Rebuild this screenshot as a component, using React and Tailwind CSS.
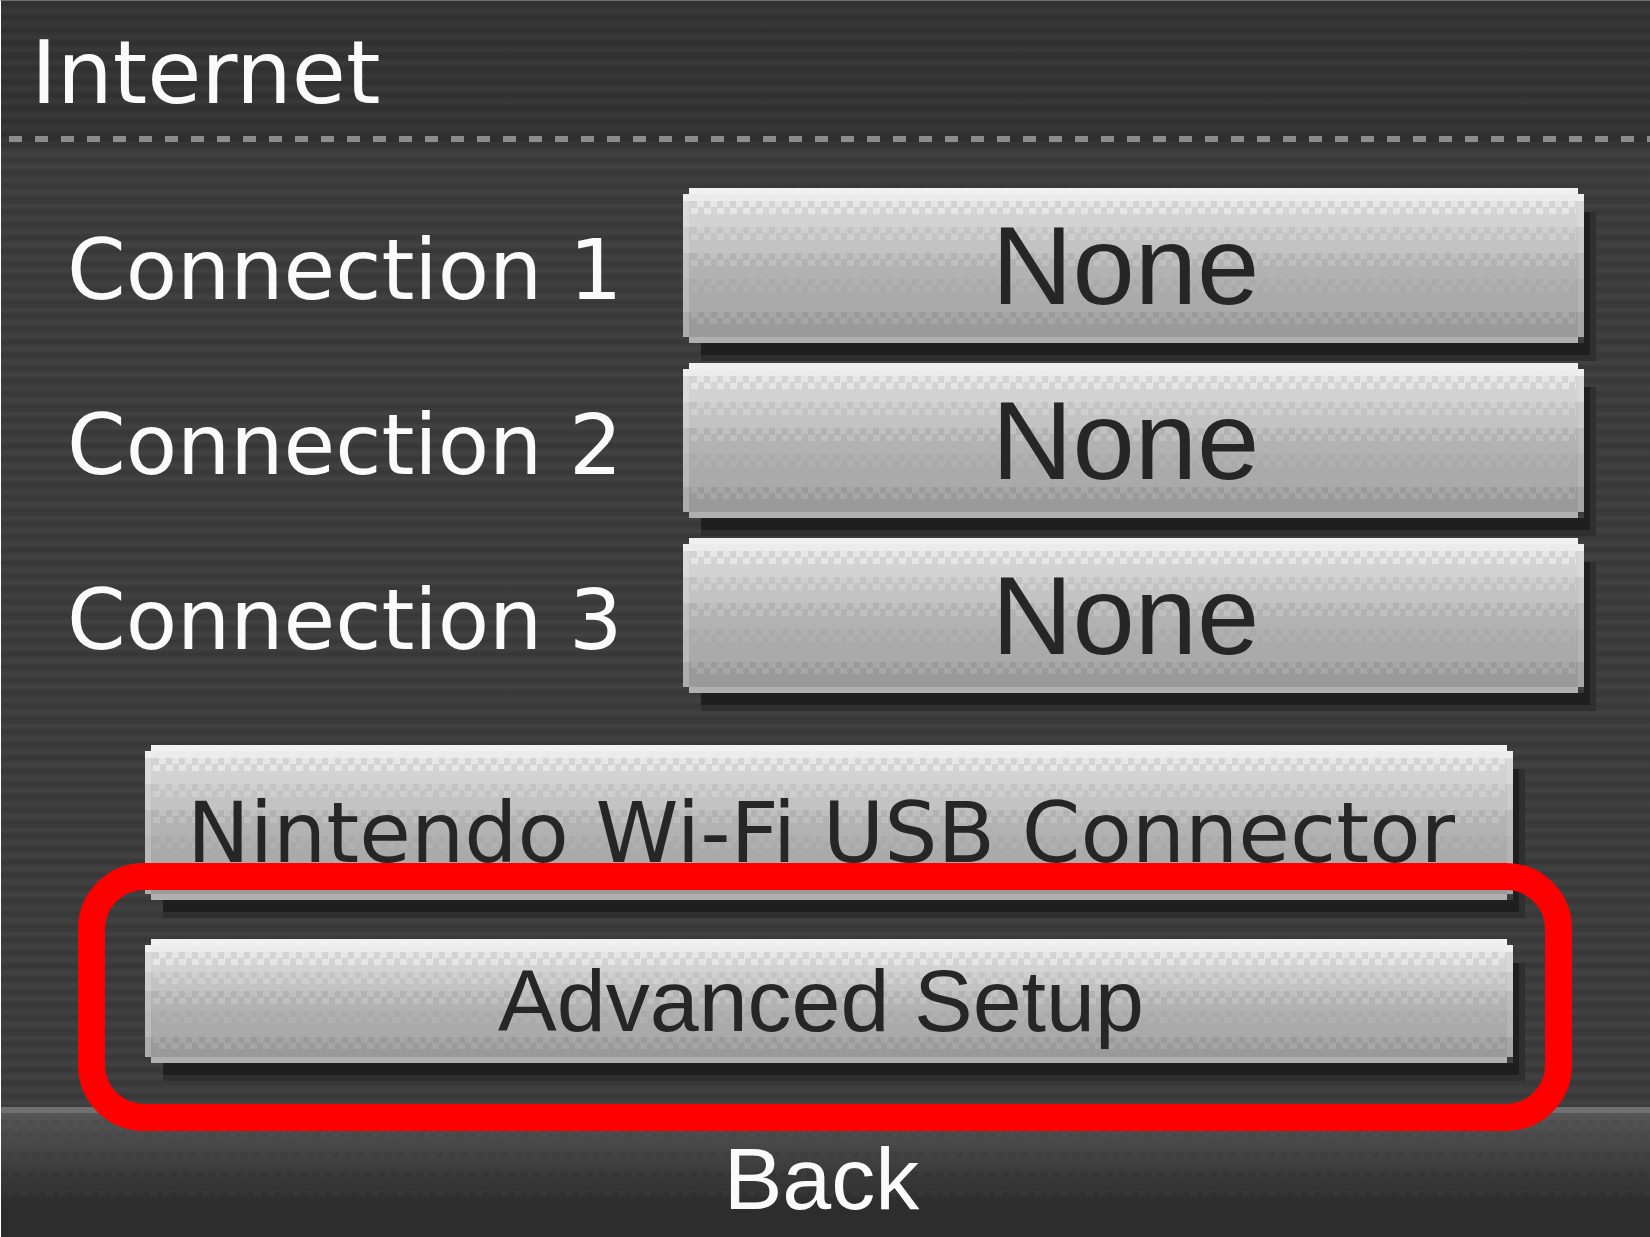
const CHECKER =
  "[mask-image:conic-gradient(#000_25%,transparent_0_50%,#000_0_75%,transparent_0)] [mask-size:13px_13px]";

const FACES = {
  tall: {
    height: "h-[155px]",
    base: "bg-[linear-gradient(#ececec_0_13px,#d3d3d3_13px_39px,#c3c3c3_39px_65px,#b2b2b2_65px_91px,#aaaaaa_91px_124px,#9a9a9a_124px)]",
    dots: "bg-[linear-gradient(#ececec_0_26px,#d3d3d3_26px_52px,#c3c3c3_52px_78px,#b2b2b2_78px_104px,#aaaaaa_104px_136px,#9a9a9a_136px)]",
  },
  short: {
    height: "h-[124px]",
    base: "bg-[linear-gradient(#ececec_0_13px,#d3d3d3_13px_33px,#c3c3c3_33px_52px,#b2b2b2_52px_72px,#aaaaaa_72px_98px,#9a9a9a_98px)]",
    dots: "bg-[linear-gradient(#ececec_0_26px,#d3d3d3_26px_45px,#c3c3c3_45px_65px,#b2b2b2_65px_84px,#aaaaaa_84px_110px,#9a9a9a_110px)]",
  },
};

function PanelButton({ id, face = "tall", labelledBy, className = "", children }) {
  const f = FACES[face];
  return (
    <div className="w-full shadow-[12px_18px_0_-6px_#1f1f1f,15px_21px_0_-3px_#2f2f2f]">
      <button
        id={id}
        type="button"
        aria-labelledby={labelledBy}
        className={`relative block w-full text-[#262626] [clip-path:polygon(6px_0,calc(100%-6px)_0,calc(100%-6px)_6px,100%_6px,100%_calc(100%-6px),calc(100%-6px)_calc(100%-6px),calc(100%-6px)_100%,6px_100%,6px_calc(100%-6px),0_calc(100%-6px),0_6px,6px_6px)] ${f.height} ${f.base}`}
      >
        <span className={`absolute inset-x-2 inset-y-0 opacity-80 ${f.dots} ${CHECKER}`} />
        <span className="absolute inset-0 shadow-[inset_6px_0_0_#ffffff30,inset_-6px_0_0_#ffffff20,inset_0_6px_0_#ffffff40,inset_0_-6px_0_#ffffff38]" />
        <span className={`relative flex h-full items-center justify-center pr-4 whitespace-nowrap ${className}`}>
          {children}
        </span>
      </button>
    </div>
  );
}

const connections = [
  { id: 1, value: "None" },
  { id: 2, value: "None" },
  { id: 3, value: "None" },
];

export default function App() {
  return (
    <div className="flex min-h-screen flex-col border-t border-l border-t-[#6f6f6f] border-l-white bg-[repeating-linear-gradient(#3c3c3c_0,#373737_3px,#424242_10px,#3c3c3c_13px)] font-['DejaVu_Sans',sans-serif] text-[84px] leading-none">
      <header className="bg-[repeating-linear-gradient(#343434_0,#2f2f2f_3px,#393939_10px,#343434_13px)] pb-1">
        <h1 className="flex h-[135px] items-center pt-2 pl-[30px] text-[88px] text-[#fafafa]">
          Internet
        </h1>
        <div className="ml-2 h-[6px] bg-[repeating-linear-gradient(90deg,#8c8c8c_0_13px,#2f2f2f_13px_26px)]" />
      </header>

      <main className="flex flex-col">
        <section className="flex flex-col gap-5 pt-[42px] pr-[66px] pl-[66px]">
          {connections.map((c) => (
            <div key={c.id} className="grid grid-cols-[616px_1fr] items-center">
              <label htmlFor={`connection-${c.id}`} className="pt-2 whitespace-nowrap text-[#fafafa]">
                Connection {c.id}
              </label>
              <PanelButton
                id={`connection-${c.id}`}
                className="font-['Liberation_Sans',sans-serif] text-[112px]"
              >
                {c.value}
              </PanelButton>
            </div>
          ))}
        </section>

        <section className="flex flex-col gap-[39px] pt-[52px] pr-[137px] pl-[144px]">
          <PanelButton className="pt-5">Nintendo Wi-Fi USB Connector</PanelButton>
          <div className="relative">
            <PanelButton face="short" className="font-['Liberation_Sans',sans-serif] text-[88px]">
              Advanced Setup
            </PanelButton>
            <div className="pointer-events-none absolute -top-[76px] -right-[59px] -bottom-[68px] -left-[67px] z-10 rounded-[66px] border-[27px] border-[#ff0000]" />
          </div>
        </section>
      </main>

      <footer className="mt-auto">
        <button
          type="button"
          className="relative block h-[130px] w-full border-t-[6px] border-[#707070] bg-[linear-gradient(#565656_0,#464646_34px,#383838_66px,#2d2d2d_90px,#2d2d2d_100%)] font-['Liberation_Sans',sans-serif] text-[88px] text-[#fafafa]"
        >
          <span
            className={`absolute inset-0 opacity-60 bg-[linear-gradient(transparent_0_6px,#0000001a_6px_12px,transparent_12px_18px,#0000001a_18px_24px,transparent_24px_38px,#0000001a_38px_44px,transparent_44px_58px,#00000026_58px_64px,transparent_64px_77px,#ffffff0c_77px_83px,transparent_83px)] ${CHECKER}`}
          />
          <span className="relative flex h-full items-center justify-center pt-2 pr-2">Back</span>
        </button>
      </footer>
    </div>
  );
}
